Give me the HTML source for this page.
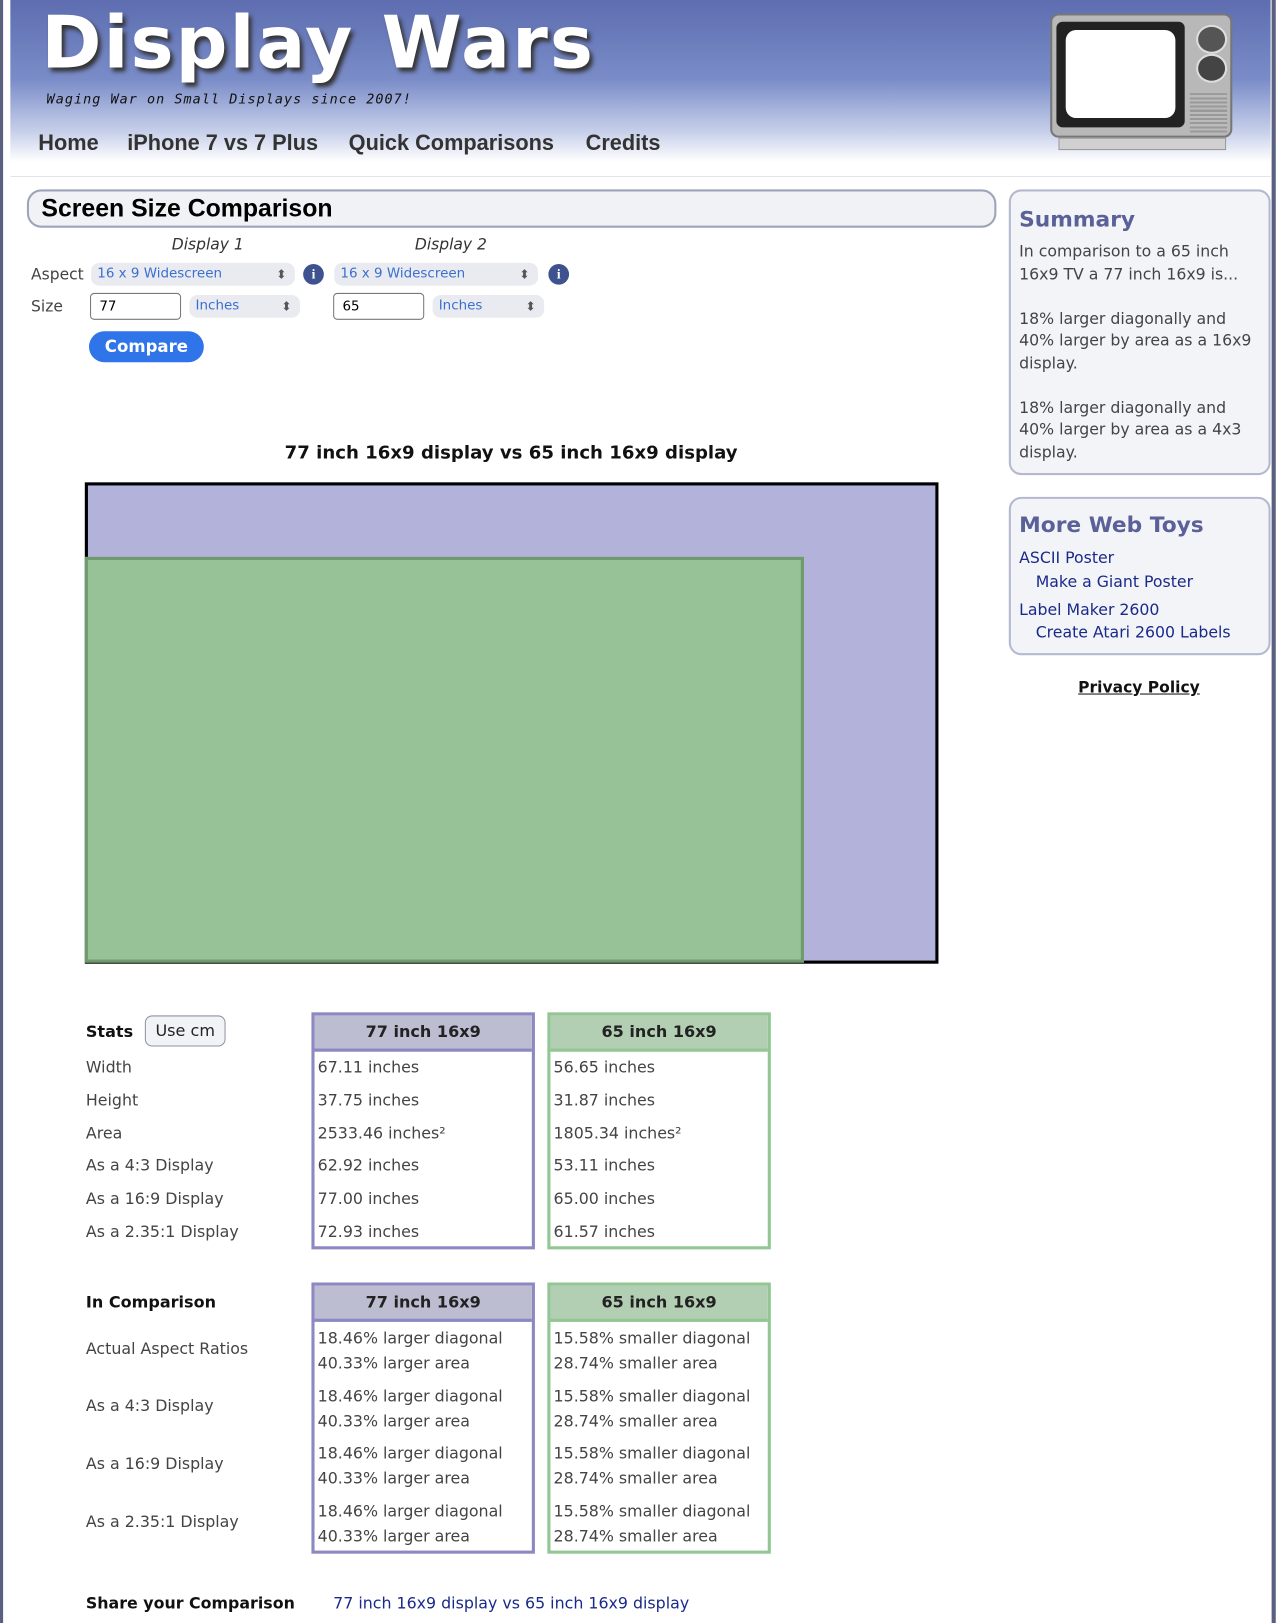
<!DOCTYPE html>
<html><head><meta charset="utf-8">
<style>
html,body{margin:0;padding:0;background:#fff;overflow:hidden}
#w{position:relative;width:1240px;height:1568px;transform:scale(1.03468,1.0351);transform-origin:0 0;font-family:"DejaVu Sans",Verdana,sans-serif;color:#444}
.a{position:absolute;white-space:nowrap}
.hdr{left:10px;top:0;width:1218px;height:170px;background:linear-gradient(#5d6db0 0%,#7a8cc8 45%,#c7d0ea 75%,#fff 92%);border-bottom:1px solid #e2e4ea}
.nav{font-family:"Liberation Sans",Arial,sans-serif;font-size:21px;color:#333;font-weight:bold;top:127px}
.sel{height:22px;border-radius:8px;background:#e9ebf1;color:#3a6fd0;font-size:13px;line-height:22px;padding-left:6px;box-sizing:border-box}
.sel:after{content:"\2B0D";position:absolute;right:8px;top:0;font-size:12px;color:#555}
.inp{height:26px;border:1px solid #777;border-radius:4px;font-size:13px;line-height:26px;padding-left:8px;box-sizing:border-box;color:#000}
.info{width:20px;height:20px;border-radius:50%;background:#3e528f;color:#fff;font:bold 13px "Liberation Serif",serif;text-align:center;line-height:20px}
.tb{box-sizing:border-box;border:3px solid}
.th{box-sizing:border-box;font-weight:bold;color:#222;font-size:15.5px;text-align:center;line-height:32px;height:35px}
.lbl{font-size:15.3px;color:#444}
.box{box-sizing:border-box;border:2px solid #b4b9cf;border-radius:12px;background:#f3f4f7}
</style></head><body><div id="w">
<div class="a" style="left:0;top:0;width:3px;height:1568px;background:#5a6080"></div>
<div class="a" style="left:1229px;top:0;width:4px;height:1568px;background:#5a6080"></div>
<div class="a hdr"></div>
<div class="a" style="left:40px;top:0px;font:bold 70px 'DejaVu Sans',sans-serif;color:#fff;letter-spacing:2px;text-shadow:3px 4px 4px #333">Display Wars</div>
<div class="a" style="left:45px;top:89px;font:italic 13px 'DejaVu Sans Mono',monospace;color:#111;letter-spacing:1px">Waging War on Small Displays since 2007!</div>
<div class="a nav" style="left:37px">Home</div>
<div class="a nav" style="left:123px">iPhone 7 vs 7 Plus</div>
<div class="a nav" style="left:337px">Quick Comparisons</div>
<div class="a nav" style="left:566px">Credits</div>
<!-- TV -->
<div class="a" style="left:1015px;top:13px;width:176px;height:120px;background:#b8b8b8;border:2px solid #777;border-radius:8px;box-sizing:border-box"></div>
<div class="a" style="left:1021px;top:21px;width:124px;height:102px;background:#222;border-radius:6px"></div>
<div class="a" style="left:1030px;top:29px;width:106px;height:85px;background:#fff;border-radius:10px"></div>
<div class="a" style="left:1156px;top:24px;width:26px;height:24px;border-radius:50%;background:#555;border:2px solid #ddd"></div>
<div class="a" style="left:1156px;top:52px;width:26px;height:24px;border-radius:50%;background:#444;border:2px solid #ddd"></div>
<div class="a" style="left:1150px;top:90px;width:36px;height:38px;background:repeating-linear-gradient(#999 0 2px,#bbb 2px 4px)"></div>
<div class="a" style="left:1023px;top:133px;width:160px;height:10px;background:#d0d0d0;border:1px solid #999"></div>

<div class="a box" style="left:26px;top:183px;width:937px;height:37px;border-radius:14px;background:#f1f2f6;border-color:#9da3bb"></div>
<div class="a" style="left:40px;top:188px;font:bold 24px 'Liberation Sans',Arial,sans-serif;color:#000">Screen Size Comparison</div>
<div class="a" style="left:166px;top:227px;font-style:italic;font-size:15px;color:#333">Display 1</div>
<div class="a" style="left:401px;top:227px;font-style:italic;font-size:15px;color:#333">Display 2</div>
<div class="a" style="left:30px;top:256px;font-size:15px;color:#444">Aspect</div>
<div class="a sel" style="left:88px;top:254px;width:197px">16 x 9 Widescreen</div>
<div class="a info" style="left:293px;top:255px">i</div>
<div class="a sel" style="left:323px;top:254px;width:197px">16 x 9 Widescreen</div>
<div class="a info" style="left:530px;top:255px">i</div>
<div class="a" style="left:30px;top:287px;font-size:15px;color:#444">Size</div>
<div class="a inp" style="left:87px;top:283px;width:88px">77</div>
<div class="a sel" style="left:183px;top:285px;width:107px">Inches</div>
<div class="a inp" style="left:322px;top:283px;width:88px">65</div>
<div class="a sel" style="left:418px;top:285px;width:108px">Inches</div>
<div class="a" style="left:86px;top:320px;width:111px;height:30px;border-radius:15px;background:#2f74e8;color:#fff;font-weight:bold;font-size:16px;text-align:center;line-height:30px">Compare</div>

<div class="a" style="left:0;width:988px;top:428px;text-align:center;font-weight:bold;font-size:17.5px;color:#111">77 inch 16x9 display vs 65 inch 16x9 display</div>
<div class="a" style="left:82px;top:466px;width:825px;height:465px;box-sizing:border-box;border:3px solid #000;background:#b2b2da"></div>
<div class="a" style="left:82px;top:538px;width:695px;height:392px;box-sizing:border-box;border:3px solid #6e9a6e;background:#97c298"></div>

<div class="a" style="left:83px;top:988px;font-weight:bold;font-size:15.5px;color:#111">Stats</div>
<div class="a" style="left:140px;top:981px;width:78px;height:30px;box-sizing:border-box;border:1px solid #8f93a6;border-radius:7px;background:#f2f3f7;font-size:15.5px;text-align:center;line-height:28px;color:#222">Use cm</div>
<div class="a tb" style="left:301px;top:978px;width:216px;height:229px;border-color:#8c88c2"></div>
<div class="a th" style="left:304px;top:981px;width:210px;background:#bdbdd2;border-bottom:3px solid #8c88c2">77 inch 16x9</div>
<div class="a tb" style="left:529px;top:978px;width:216px;height:229px;border-color:#92c692"></div>
<div class="a th" style="left:532px;top:981px;width:210px;background:#b3cfb3;border-bottom:3px solid #92c692">65 inch 16x9</div>
<div class="a lbl" style="left:83px;top:1016px;line-height:31.8px">Width<br>Height<br>Area<br>As a 4:3 Display<br>As a 16:9 Display<br>As a 2.35:1 Display</div>
<div class="a lbl" style="left:307px;top:1016px;line-height:31.8px">67.11 inches<br>37.75 inches<br>2533.46 inches²<br>62.92 inches<br>77.00 inches<br>72.93 inches</div>
<div class="a lbl" style="left:535px;top:1016px;line-height:31.8px">56.65 inches<br>31.87 inches<br>1805.34 inches²<br>53.11 inches<br>65.00 inches<br>61.57 inches</div>

<div class="a" style="left:83px;top:1249px;font-weight:bold;font-size:15.5px;color:#111">In Comparison</div>
<div class="a tb" style="left:301px;top:1239px;width:216px;height:262px;border-color:#8c88c2"></div>
<div class="a th" style="left:304px;top:1242px;width:210px;background:#bdbdd2;border-bottom:3px solid #8c88c2">77 inch 16x9</div>
<div class="a tb" style="left:529px;top:1239px;width:216px;height:262px;border-color:#92c692"></div>
<div class="a th" style="left:532px;top:1242px;width:210px;background:#b3cfb3;border-bottom:3px solid #92c692">65 inch 16x9</div>
<div class="a lbl" style="left:83px;top:1294px">Actual Aspect Ratios</div>
<div class="a lbl" style="left:83px;top:1349px">As a 4:3 Display</div>
<div class="a lbl" style="left:83px;top:1405px">As a 16:9 Display</div>
<div class="a lbl" style="left:83px;top:1461px">As a 2.35:1 Display</div>
<div class="a lbl" style="left:307px;top:1281px;line-height:24px">18.46% larger diagonal<br>40.33% larger area</div>
<div class="a lbl" style="left:307px;top:1337px;line-height:24px">18.46% larger diagonal<br>40.33% larger area</div>
<div class="a lbl" style="left:307px;top:1392px;line-height:24px">18.46% larger diagonal<br>40.33% larger area</div>
<div class="a lbl" style="left:307px;top:1448px;line-height:24px">18.46% larger diagonal<br>40.33% larger area</div>
<div class="a lbl" style="left:535px;top:1281px;line-height:24px">15.58% smaller diagonal<br>28.74% smaller area</div>
<div class="a lbl" style="left:535px;top:1337px;line-height:24px">15.58% smaller diagonal<br>28.74% smaller area</div>
<div class="a lbl" style="left:535px;top:1392px;line-height:24px">15.58% smaller diagonal<br>28.74% smaller area</div>
<div class="a lbl" style="left:535px;top:1448px;line-height:24px">15.58% smaller diagonal<br>28.74% smaller area</div>
<div class="a" style="left:83px;top:1540px;font-weight:bold;font-size:15.3px;color:#111">Share your Comparison</div>
<div class="a" style="left:322px;top:1540px;font-size:15.3px;color:#1a2a8a">77 inch 16x9 display vs 65 inch 16x9 display</div>

<div class="a box" style="left:975px;top:183px;width:253px;height:276px"></div>
<div class="a" style="left:985px;top:200px;font-weight:bold;font-size:21px;color:#5a6098">Summary</div>
<div class="a" style="left:985px;top:233px;font-size:15.2px;line-height:21.5px;color:#444">In comparison to a 65 inch<br>16x9 TV a 77 inch 16x9 is...<br><br>18% larger diagonally and<br>40% larger by area as a 16x9<br>display.<br><br>18% larger diagonally and<br>40% larger by area as a 4x3<br>display.</div>
<div class="a box" style="left:975px;top:480px;width:253px;height:153px"></div>
<div class="a" style="left:985px;top:495px;font-weight:bold;font-size:21px;color:#5a6098">More Web Toys</div>
<div class="a" style="left:985px;top:530px;font-size:15.2px;color:#1a2a8a">ASCII Poster</div>
<div class="a" style="left:1001px;top:553px;font-size:15.2px;color:#1a2a8a">Make a Giant Poster</div>
<div class="a" style="left:985px;top:580px;font-size:15.2px;color:#1a2a8a">Label Maker 2600</div>
<div class="a" style="left:1001px;top:602px;font-size:15.2px;color:#1a2a8a">Create Atari 2600 Labels</div>
<div class="a" style="left:1042px;top:655px;font-weight:bold;font-size:15px;color:#111;text-decoration:underline">Privacy Policy</div>
</div></body></html>
